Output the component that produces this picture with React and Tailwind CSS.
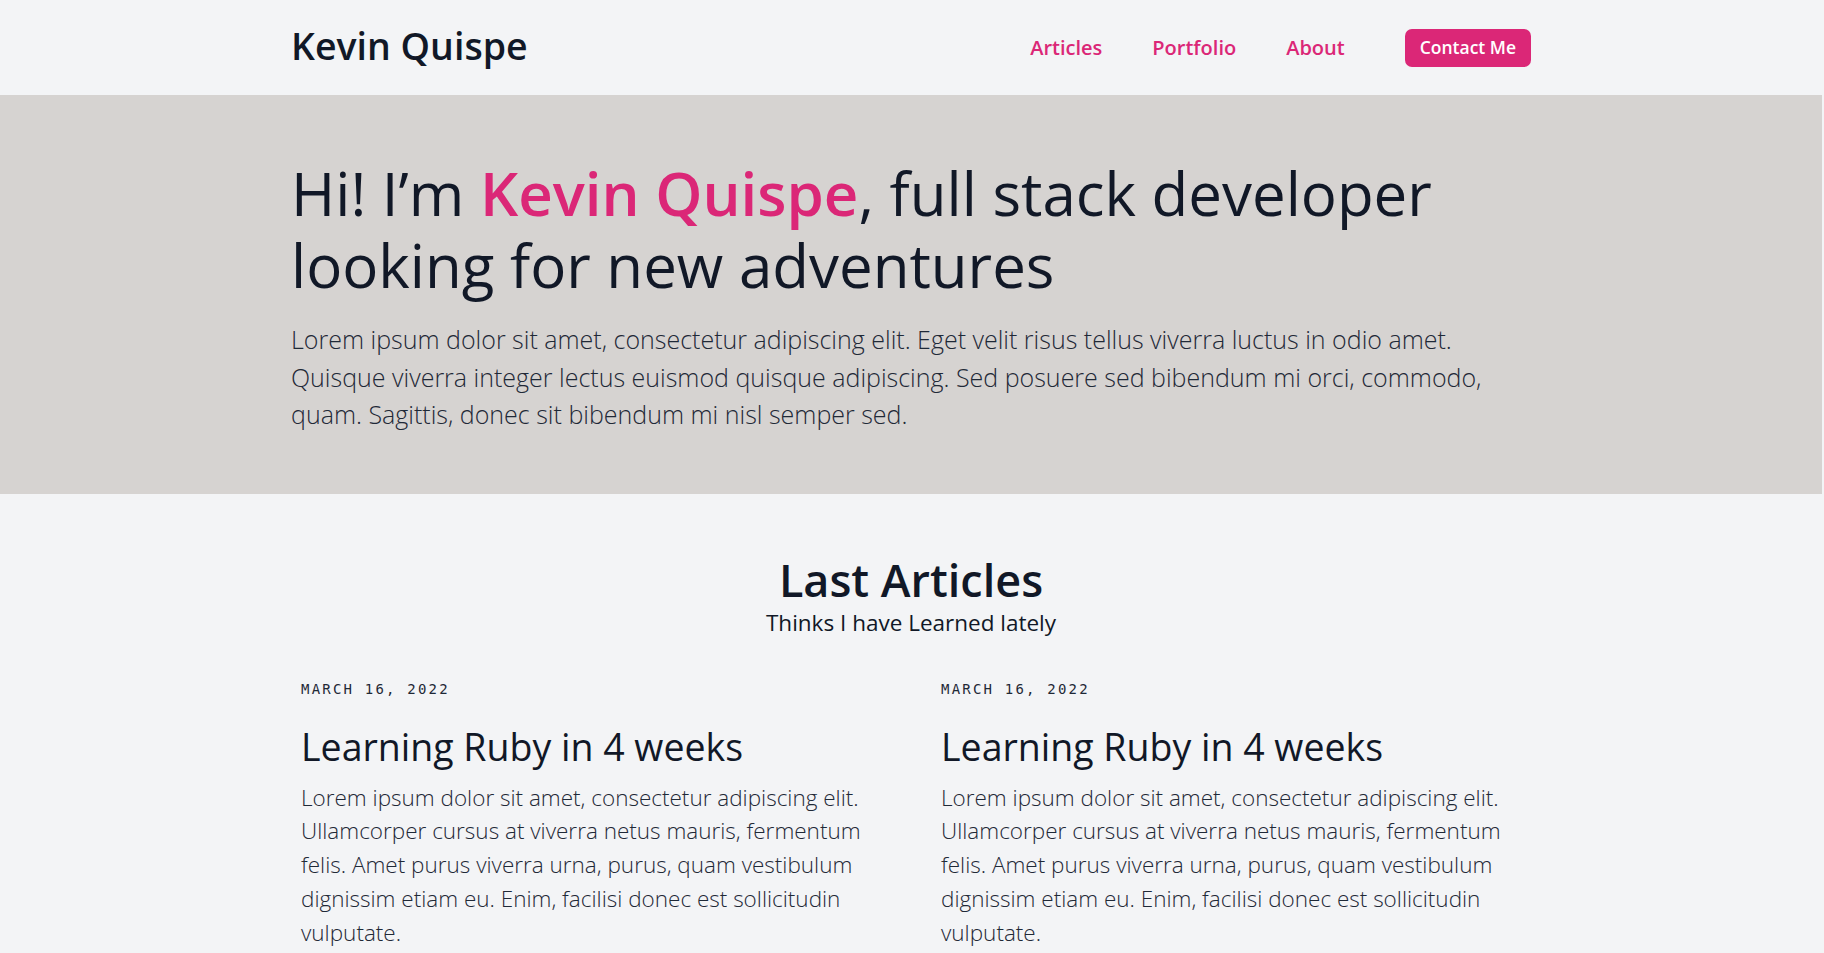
export default function App() {
  const lorem =
    "Lorem ipsum dolor sit amet, consectetur adipiscing elit. Ullamcorper cursus at viverra netus mauris, fermentum felis. Amet purus viverra urna, purus, quam vestibulum dignissim etiam eu. Enim, facilisi donec est sollicitudin vulputate.";
  const articles = [
    { date: "March 16, 2022", title: "Learning Ruby in 4 weeks", body: lorem },
    { date: "March 16, 2022", title: "Learning Ruby in 4 weeks", body: lorem },
  ];
  return (
    <div className="min-h-screen bg-[#f3f4f6] font-['Open_Sans',sans-serif] text-[#111827]">
      <div className="mr-[2px]">
        <header className="h-[95px]">
          <div className="mx-auto flex h-full max-w-[1280px] items-center justify-between px-5">
            <a href="#" className="mb-[5px] text-[37.5px] font-semibold leading-[45px]">
              Kevin Quispe
            </a>
            <nav className="flex items-center">
              <ul className="flex gap-[50px] text-[20px] font-semibold text-[#db2777]">
                <li><a href="#">Articles</a></li>
                <li><a href="#">Portfolio</a></li>
                <li><a href="#">About</a></li>
              </ul>
              <a
                href="#"
                className="ml-[60px] flex h-[38px] items-center rounded-[7px] bg-[#db2777] px-[15px] text-[17.5px] font-semibold text-white"
              >
                Contact Me
              </a>
            </nav>
          </div>
        </header>

        <section className="bg-[#d6d3d1]">
          <div className="mx-auto max-w-[1280px] px-5 pb-[60px] pt-[62px]">
            <h1 className="text-[60px] font-normal leading-[72px]">
              Hi! I’m <span className="font-semibold text-[#db2777]">Kevin Quispe</span>, full stack developer
              looking for new adventures
            </h1>
            <p className="mt-[20px] text-[25px] font-light leading-[37.5px] text-[#1f2937]">
              Lorem ipsum dolor sit amet, consectetur adipiscing elit. Eget velit risus tellus viverra luctus in odio
              amet. Quisque viverra integer lectus euismod quisque adipiscing. Sed posuere sed bibendum mi orci,
              commodo, quam. Sagittis, donec sit bibendum mi nisl semper sed.
            </p>
          </div>
        </section>

        <section className="mx-auto max-w-[1280px] px-5 pb-16 pt-[61px]">
          <h2 className="text-center text-[45px] font-semibold leading-[50px]">Last Articles</h2>
          <p className="text-center text-[22.5px] leading-[35px]">Thinks I have Learned lately</p>
          <div className="mt-[29px] grid grid-cols-2 gap-x-[40px]">
            {articles.map((a, i) => (
              <article key={i} className="p-[10px]">
                <p className="font-['DejaVu_Sans_Mono',monospace] text-[14px] uppercase leading-[20px] tracking-[2.2px] text-[#1f2937]">
                  {a.date}
                </p>
                <h3 className="mt-[25px] text-[37.5px] font-normal leading-[45px]">{a.title}</h3>
                <p className="mt-[12px] text-[22.5px] font-light leading-[33.75px] text-[#1f2937]">{a.body}</p>
              </article>
            ))}
          </div>
        </section>
      </div>
    </div>
  );
}
